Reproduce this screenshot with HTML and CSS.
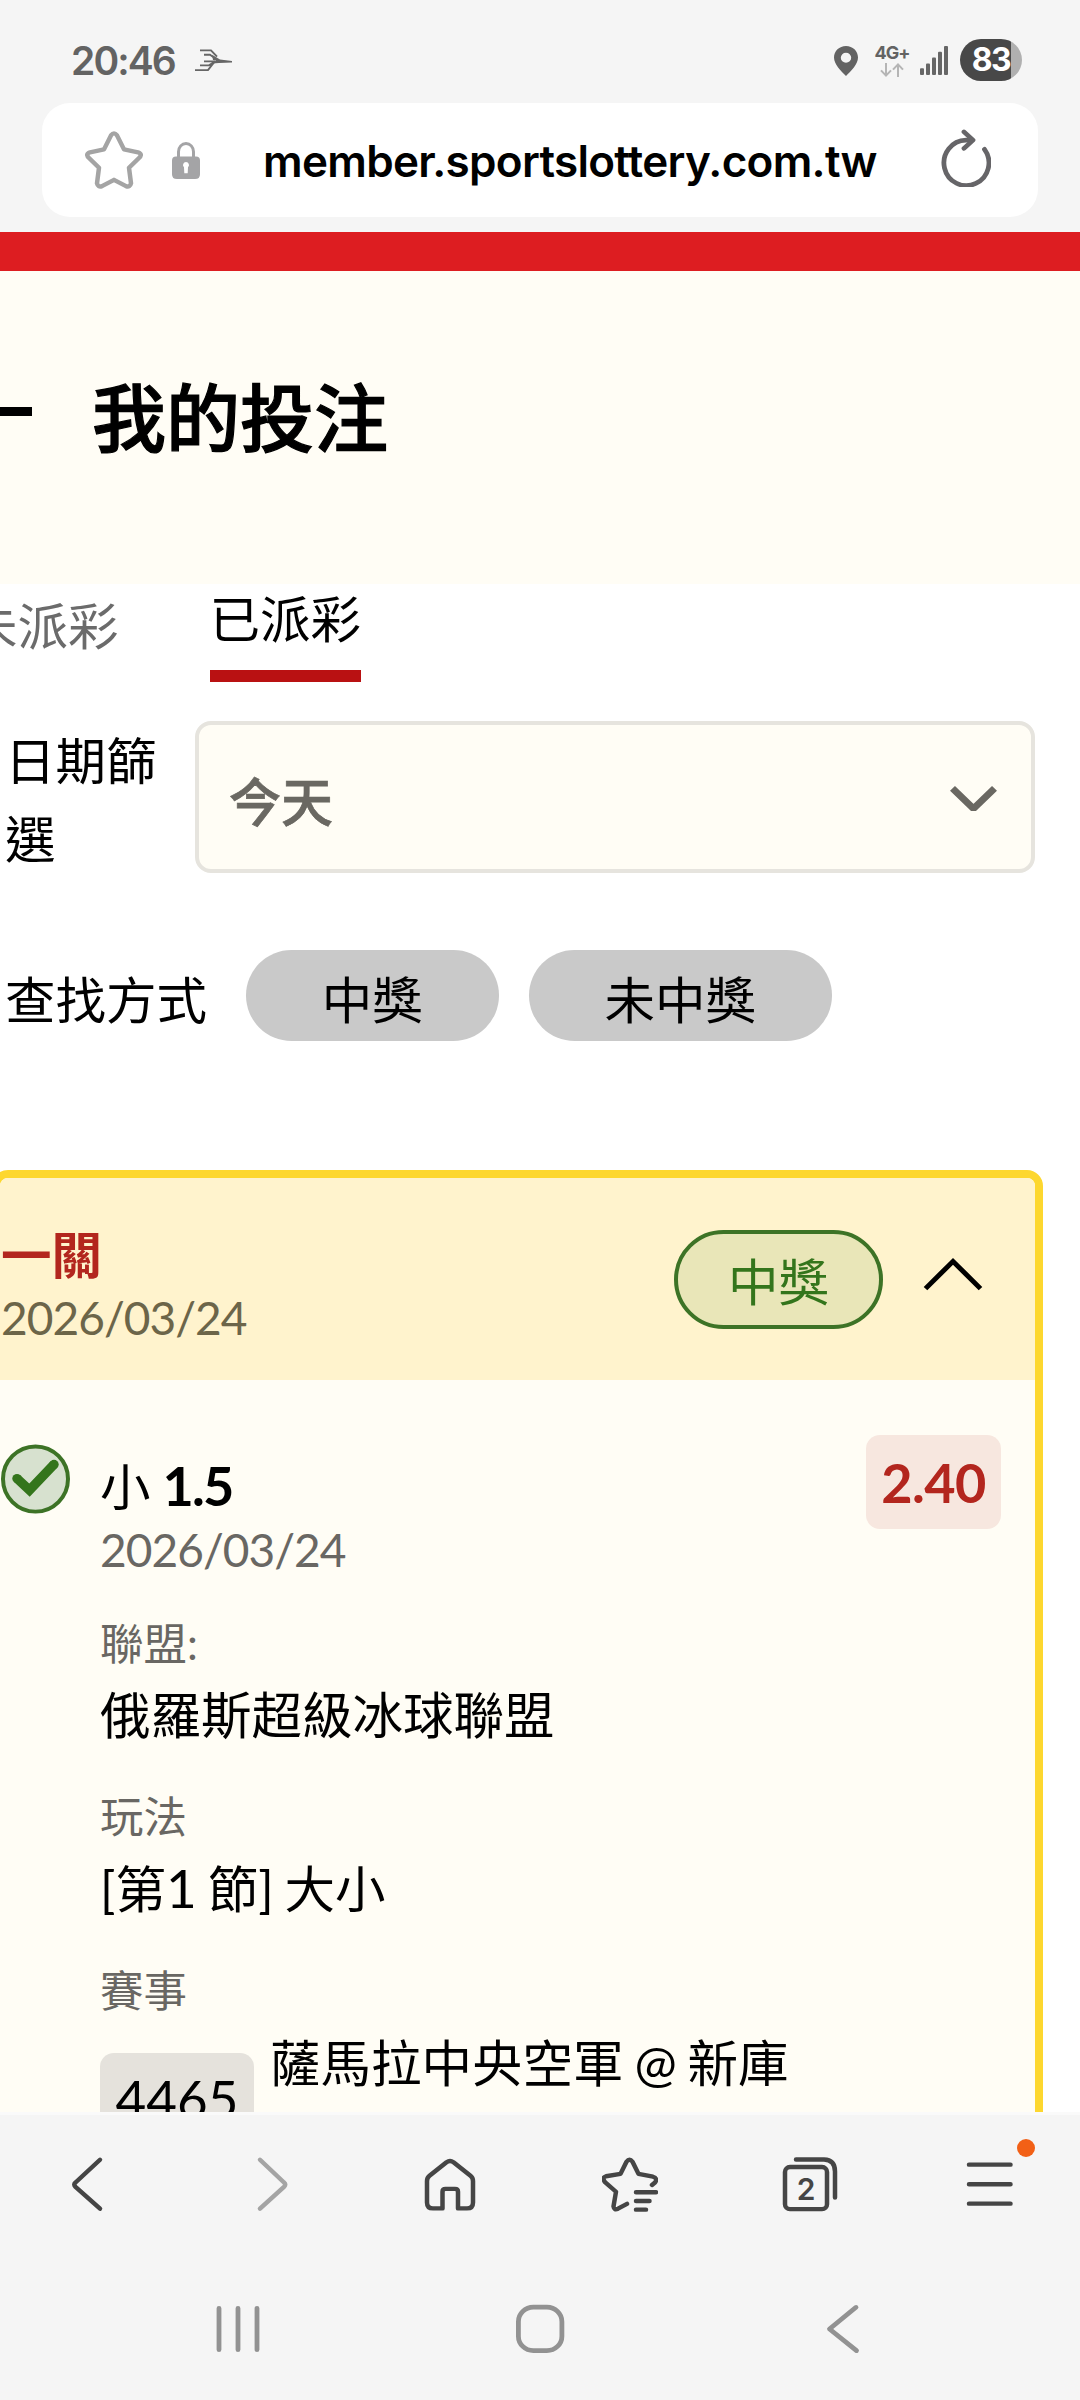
FILE: index.html
```html
<!DOCTYPE html>
<html lang="zh-Hant">
<head>
<meta charset="utf-8">
<title>我的投注</title>
<link rel="stylesheet" href="styles.css">
</head>
<body>
<header class="chrome">
  <div class="status">
    <span class="clock">20:46</span>
    <svg class="wing" width="38" height="23" viewBox="0 0 38 24" preserveAspectRatio="none" fill="none" stroke="#666" stroke-width="1.900"><path d="M5 1.500H16L22 8M9 6H15L19 9M9 13H20M5 17H14L20 13M0 22H13L19 14"/><path d="M17 6L25 11L37 12.500V14L24 14.500L17 15L21 12L18 11.500Z" fill="#666" stroke="none"/></svg>
    <div class="status-right">
      <svg class="pin" width="24" height="30" viewBox="0 0 24 31" preserveAspectRatio="none"><path fill="#636363" fill-rule="evenodd" d="M12 0C5.300 0 0 5.300 0 12C0 19 7 26 12 31C17 26 24 19 24 12C24 5.300 18.700 0 12 0ZM12 7A5.200 5.200 0 1 1 12 17.400A5.200 5.200 0 1 1 12 7Z"/></svg>
      <div class="net"><span class="net-label">4G+</span>
        <svg width="24" height="14" viewBox="0 0 24 15" preserveAspectRatio="none" fill="none" stroke="#b5b5b5" stroke-width="2"><path d="M6 0V13M1 8L6 13.500L11 8M18 15V1M13 7L18 1.500L23 7"/></svg>
      </div>
      <svg class="signal" width="28" height="29" viewBox="0 0 28 30" preserveAspectRatio="none" fill="#666"><rect y="23" width="4" height="7" rx="1"/><rect x="6" y="18" width="4" height="12" rx="1"/><rect x="12" y="12" width="4" height="18" rx="1"/><rect x="18" y="6" width="4" height="24" rx="1"/><rect x="24" width="4" height="30" rx="1"/></svg>
      <span class="battery">83</span>
    </div>
  </div>
  <div class="urlbar">
    <svg class="fav" width="58" height="58" viewBox="0 0 58 60" preserveAspectRatio="none" fill="none" stroke="#a4a4a4" stroke-width="4.500" stroke-linejoin="round"><path d="M26 4.500Q29 .5 32 4.500L39 19L53 22Q58 24 54 28L44 38L46 54Q45 58.500 41 57L29 50.500L17 57Q13 58.500 12 54L14 38L4 28Q0 24 5 22L19 19Z"/></svg>
    <svg class="lock" width="28" height="37" viewBox="0 0 28 38" preserveAspectRatio="none"><path d="M6.500 17V10A7.500 8.500 0 0 1 21.500 10V17" fill="none" stroke="#a4a4a6" stroke-width="3"/><path fill="#a4a4a6" fill-rule="evenodd" d="M4 15H24Q28 15 28 19V33Q28 38 23 38H5Q0 38 0 33V19Q0 15 4 15ZM14 20.500A3.200 3.200 0 0 0 12 26L12.300 32H15.700L16 26A3.200 3.200 0 0 0 14 20.500Z"/></svg>
    <span class="url">member.sportslottery.com.tw</span>
    <svg class="reload" width="50" height="58" viewBox="0 0 50 60" preserveAspectRatio="none" fill="none" stroke="#666568" stroke-width="4.800" stroke-linecap="round" stroke-linejoin="round"><path d="M43.500 21A22.500 23.500 0 1 1 25 11.500H31"/><path d="M23 3L32 11.500L23 20"/></svg>
  </div>
</header>

<main class="page">
  <div class="brand"></div>
  <div class="title-bar"><span class="back-arrow"></span><h1>我的投注</h1></div>
  <nav class="tabs"><span class="tab">未派彩</span><span class="tab active">已派彩</span></nav>
  <div class="filter-row">
    <span class="filter-label">日期篩<br>選</span>
    <div class="select"><span>今天</span>
      <svg width="47" height="27" viewBox="0 0 47 28" preserveAspectRatio="none" fill="none" stroke="#6a6862" stroke-width="7"><path d="M2.500 2.500L23.500 23.500L44.500 2.500" stroke-linejoin="bevel"/></svg>
    </div>
  </div>
  <div class="mode-row"><span class="mode-label">查找方式</span><span class="pill">中獎</span><span class="pill">未中獎</span></div>

  <section class="card">
    <div class="card-head">
      <div class="card-title"><strong>一關</strong><span class="date">2026/03/24</span></div>
      <span class="won">中獎</span>
      <svg class="chev" width="60" height="35" viewBox="0 0 60 36" preserveAspectRatio="none" fill="none" stroke="#000" stroke-width="5"><path d="M2.500 32.500L30 4.500L57.500 32.500"/></svg>
    </div>
    <div class="bet">
      <svg class="tick" width="70" height="70" viewBox="0 0 70 72" preserveAspectRatio="none"><ellipse cx="35.500" cy="36" rx="32.500" ry="33.500" fill="#d7e1cf" stroke="#3d7326" stroke-width="4"/><path d="M17 35.500L29.500 47.500L54 21" fill="none" stroke="#34751c" stroke-width="9.500"/><circle cx="17" cy="35.500" r="4.700" fill="#34751c"/><circle cx="54" cy="21" r="4.700" fill="#34751c"/></svg>
      <div class="info">
        <div class="pick"><span>小 <b>1.5</b></span><span class="odds">2.40</span></div>
        <span class="date bet-date">2026/03/24</span>
        <span class="key">聯盟:</span><span class="value">俄羅斯超級冰球聯盟</span>
        <span class="key">玩法</span><span class="value">[第<span class="num">1</span> 節] 大小</span>
        <span class="key">賽事</span>
        <div class="match"><span class="code">4465</span><span class="teams">薩馬拉中央空軍 @ 新庫</span></div>
      </div>
    </div>
  </section>
</main>

<footer class="bottom">
  <div class="toolbar">
    <svg class="prev" width="56" height="62" viewBox="0 0 56 64" preserveAspectRatio="none" fill="none" stroke="#454545" stroke-width="4.500" stroke-linecap="round" stroke-linejoin="round"><path d="M41 7L16.500 30.500Q14 32.500 16.500 35L41 57.500"/></svg>
    <svg width="56" height="62" viewBox="0 0 56 64" preserveAspectRatio="none" fill="none" stroke="#a4a4a4" stroke-width="4.500" stroke-linecap="round" stroke-linejoin="round"><path d="M18 7L42 30.500Q44.500 32.500 42 35L18 57.500"/></svg>
    <svg width="56" height="62" viewBox="0 0 56 64" preserveAspectRatio="none" fill="none" stroke="#454545" stroke-width="4.500" stroke-linejoin="round"><path d="M20.500 57.200V40Q20.500 37 23.500 37H33Q36 37 36 40V57.200H45Q51 57.200 51 51V29Q51 25.500 48.500 23.500L31.500 9.500Q28 7 24.500 9.500L7.500 23.500Q5 25.500 5 29V51Q5 57.200 11 57.200Z"/></svg>
    <svg width="56" height="62" viewBox="0 0 56 64" preserveAspectRatio="none" fill="none" stroke="#454545" stroke-width="4.500" stroke-linecap="round" stroke-linejoin="round"><path d="M50 33L53 30.500Q56 26 51 24.500L36.500 21.500L30.500 9Q27.500 5 24.500 9L18.500 21.500L4 24Q-.5 25.500 3 30L14 40L11.500 55Q12 59.500 16 57.500L25 52.500M34 40.500H54M34 49.500H47.500M34 58.500H44"/></svg>
    <div class="tab-count"><svg width="56" height="62" viewBox="0 0 56 64" preserveAspectRatio="none" fill="none" stroke="#454545" stroke-width="4.500" stroke-linecap="round"><rect x="3" y="14.500" width="42" height="43.500" rx="5"/><path d="M14 6.700H42Q53 7 53 19V46"/></svg><span>2</span></div>
    <div class="menu"><svg width="56" height="62" viewBox="0 0 56 64" preserveAspectRatio="none" stroke="#454545" stroke-width="4.500" stroke-linecap="round"><path d="M7 12H48.500M7 32.300H48.500M7 52.300H48.500"/></svg><i class="dot"></i></div>
  </div>
  <div class="sysnav">
    <svg width="60" height="58" viewBox="0 0 60 60" preserveAspectRatio="none" stroke="#929292" stroke-width="4.800" stroke-linecap="round"><path d="M11 8.600V51.400M30 8.600V51.400M49 8.600V51.400"/></svg>
    <svg width="60" height="58" viewBox="0 0 60 60" preserveAspectRatio="none" fill="none" stroke="#929292" stroke-width="4.800"><rect x="8.400" y="7.400" width="43.500" height="45" rx="15"/></svg>
    <svg width="60" height="58" viewBox="0 0 60 60" preserveAspectRatio="none" fill="none" stroke="#929292" stroke-width="4.800" stroke-linecap="round" stroke-linejoin="round"><path d="M44 7.600L17.500 30L44.500 52.400"/></svg>
  </div>
</footer>
</body>
</html>
```
FILE: styles.css
```css
* { box-sizing: border-box; }
body {
  margin: 0;
  width: 1080px;
  height: 2400px;
  overflow: hidden;
  display: flex;
  flex-direction: column;
  background: #f5f5f5;
  color: #000;
  font-family: Lato, "Noto Sans CJK TC", sans-serif;
  font-size: 50.500px;
}
svg { display: block; flex: none; }
.chrome { height: 232px; flex: none; padding: 0 42px; font-family: Inter, "Noto Sans CJK TC", sans-serif; }
.status { height: 103px; display: flex; align-items: center; padding: 17px 16px 0 29px; color: #636363; }
.clock { font-size: 39px; font-weight: 600; width: 124px; letter-spacing: -1.900px; }
.status-right { margin-left: auto; display: flex; align-items: center; }
.pin { margin-top: 2px; }
.net { width: 34px; margin: 2px 11px 0 17px; display: flex; flex-direction: column; align-items: center; gap: 3px; }
.net-label { font-size: 18px; font-weight: 700; line-height: 14px; letter-spacing: -1px; }
.battery {
  margin-left: 12px; width: 62px; height: 42px; border-radius: 21px;
  background: linear-gradient(90deg, #484848 51px, #b0b0b0 51px);
  color: #fff; font-size: 32px; font-weight: 700; line-height: 42px; text-align: center; letter-spacing: -1.500px;
}
.urlbar { height: 114px; border-radius: 28px; background: #fff; display: flex; align-items: center; padding: 0 47px 0 43px; }
.lock { margin-left: 29px; }
.url { margin-left: 63px; padding-top: 2px; font-size: 44px; font-weight: 600; letter-spacing: -0.700px; white-space: nowrap; }
.reload { margin: 0 0 5px auto; }

.page { height: 1880px; flex: none; overflow: hidden; background: #fff; }
.brand { height: 39px; background: #dd1d21; }
.title-bar { height: 313px; padding-bottom: 20px; background: #fffdf5; display: flex; align-items: center; gap: 60px; }
.back-arrow { width: 32px; height: 9px; margin-bottom: 12px; background: #000; }
h1 { margin: 0; font-size: 74px; line-height: 90px; font-weight: 500; -webkit-text-stroke: 1.200px #000; }
.tabs { display: flex; gap: 91px; margin-left: -33px; height: 98px; }
.tab { line-height: 84px; color: #6b6b6b; white-space: nowrap; }
.tab.active { line-height: 70px; height: 98px; color: #000; border-bottom: 12px solid #b91112; }
.filter-row { margin: 39px 45px 0 6px; height: 152px; display: flex; align-items: center; }
.filter-label { width: 190px; margin-left: -1px; line-height: 78px; padding-top: 5px; }
.select {
  flex: 1; height: 152px; border: 4px solid #e6e4de; border-radius: 16px; background: #fffdf5;
  display: flex; align-items: center; justify-content: space-between; padding: 5px 34px 0 30px;
  color: #6a6862; font-weight: 500; font-size: 52px; -webkit-text-stroke: 0.700px #6a6862;
}
.mode-row { margin: 77px 0 0 5px; display: flex; height: 91px; line-height: 91px; }
.mode-label { width: 241px; padding-top: 4px; }
.pill { height: 91px; padding: 4px 75.800px 0; margin-right: 30px; border-radius: 46px; background: #c9c9c9; }

.card { margin: 129px 37px 0 -8px; height: 1200px; border: 8px solid #fdd72f; border-radius: 16px; background: #fffdf5; overflow: hidden; }
.card-head { height: 202px; background: #fff3cd; display: flex; align-items: center; padding: 0 52px 0 1px; }
.card-title { display: flex; flex-direction: column; margin-right: auto; line-height: 63px; padding-top: 14px; }
.card-title strong { color: #b3261e; }
.date { font-size: 46px; letter-spacing: -0.950px; color: #6c6549; }
.won { width: 209px; height: 99px; border: 4px solid #3d7326; border-radius: 50px; background: #e9e6b8; color: #34751c; text-align: center; line-height: 96px; margin-right: 40px; }
.chev { margin-bottom: 10px; }
.bet { display: flex; gap: 30px; padding: 55px 34px 0 0; }
.tick { margin-top: 9px; }
.info { flex: 1; display: flex; flex-direction: column; }
.pick { display: flex; justify-content: space-between; height: 94px; line-height: 101px; word-spacing: -1px; }
.pick b { font-size: 54px; letter-spacing: -1.800px; }
.odds { width: 135px; height: 94px; line-height: 95px; border-radius: 14px; background: #f7e7df; color: #b3261e; font-size: 54px; font-weight: 700; text-align: center; letter-spacing: -0.600px; }
.bet-date { line-height: 42px; color: #696763; }
.key { font-size: 43.500px; line-height: 60px; color: #696763; margin-top: 29px; }
.bet-date + .key { margin-top: 42px; }
.value { line-height: 84px; word-spacing: -2px; }
.num { font-size: 53px; }
.match { display: flex; align-items: flex-start; gap: 16px; padding-top: 33px; }
.code { width: 154px; height: 100px; line-height: 91px; border-radius: 14px; background: #e5e2dc; text-align: center; font-size: 53px; }
.teams { line-height: 60px; margin-top: -20px; word-spacing: -2px; }

.bottom { flex: 1; border-top: 3px solid #fafafa; }
.toolbar { height: 140px; padding: 38px 62px 0; display: flex; justify-content: space-between; }
.toolbar .prev { margin: 0 3px 0 -3px; }
.tab-count, .menu { position: relative; }
.tab-count span { position: absolute; left: 0; top: 15px; width: 48px; text-align: center; font: 600 30px/42px Inter, sans-serif; color: #454545; }
.dot { position: absolute; left: 55px; top: -14px; width: 18px; height: 18px; border-radius: 50%; background: #f26016; }
.sysnav { display: flex; justify-content: space-between; padding: 45px 208px 0; }
```
